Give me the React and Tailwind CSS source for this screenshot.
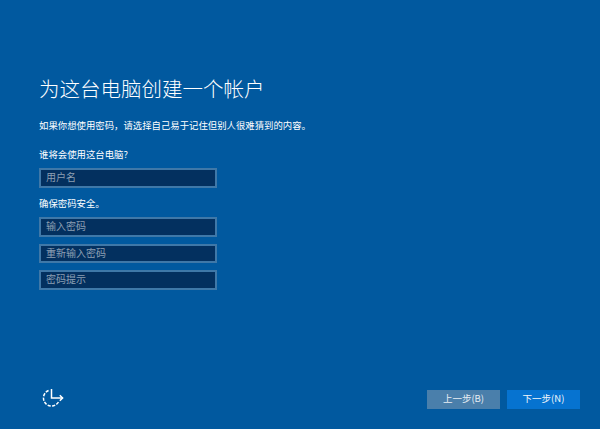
const FONT = "font-['Noto_Sans_CJK_SC','Liberation_Sans',sans-serif]";

const Field = ({ placeholder, className = "" }) => (
  <div className={`flex h-[19.5px] w-[178px] items-center border-2 border-[#3f78a8] bg-[#03305f] pb-[2px] pl-[5px] text-[10px] text-[#8c9fb3] ${className}`}>
    {placeholder}
  </div>
);

const EaseIcon = () => (
  <svg width="22" height="22" viewBox="0 0 22 22" fill="none" stroke="#ffffff" strokeWidth="1.5">
    <path d="M16.4 14A8 8 0 1 1 7 2.4" strokeDasharray="3.2 1.3" />
    <path d="M9.5 1v9h11" />
    <path d="M17.8 7.3l2.8 2.7-2.8 2.7" />
  </svg>
);

export default function App() {
  return (
    <div className={`flex h-[429px] w-[600px] flex-col overflow-hidden bg-[#01599f] text-white ${FONT}`}>
      <main className="flex-1 pl-[39px] pt-[72px]">
        <h1 className="text-[20.5px] font-light leading-[32px] text-white">为这台电脑创建一个帐户</h1>
        <p className="mt-[14px] text-[9.4px] leading-[14px]">如果你想使用密码，请选择自己易于记住但别人很难猜到的内容。</p>
        <p className="mt-[15px] text-[9.4px] leading-[14px]">谁将会使用这台电脑?</p>
        <Field placeholder="用户名" className="mt-[7px]" />
        <p className="mt-[8px] text-[9.4px] leading-[14px]">确保密码安全。</p>
        <Field placeholder="输入密码" className="mt-[7.5px]" />
        <Field placeholder="重新输入密码" className="mt-[7px]" />
        <Field placeholder="密码提示" className="mt-[7px]" />
      </main>
      <footer className="flex items-center justify-between pb-[19px] pl-[42px] pr-[20px]">
        <EaseIcon />
        <div className="flex gap-[7px] text-[9.5px] leading-none">
          <button className="h-[19px] w-[73px] bg-[#4a7fab] text-[#e8eef4]">上一步(B)</button>
          <button className="h-[19px] w-[73px] bg-[#0673d0] text-[#f2f7fb]">下一步(N)</button>
        </div>
      </footer>
    </div>
  );
}
